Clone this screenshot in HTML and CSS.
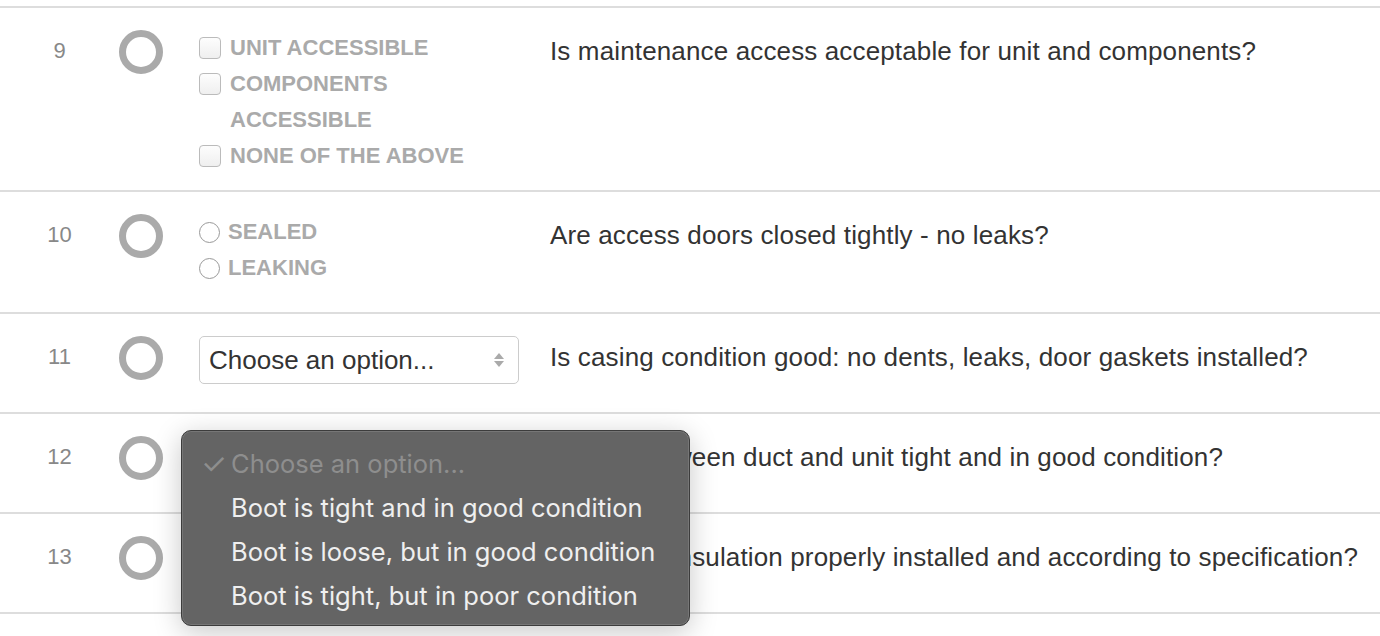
FILE: index.html
```html
<!DOCTYPE html>
<html>
<head>
<meta charset="utf-8">
<link rel="stylesheet" href="styles.css">
</head>
<body>
<div class="list">
  <div class="row">
    <div class="num">9</div>
    <div class="status"><span class="ring"></span></div>
    <div class="opts">
      <label class="opt"><span class="cb"></span><span class="lbl">UNIT ACCESSIBLE</span></label>
      <label class="opt"><span class="cb"></span><span class="lbl">COMPONENTS ACCESSIBLE</span></label>
      <label class="opt"><span class="cb"></span><span class="lbl">NONE OF THE ABOVE</span></label>
    </div>
    <div class="q">Is maintenance access acceptable for unit and components?</div>
  </div>
  <div class="row">
    <div class="num">10</div>
    <div class="status"><span class="ring"></span></div>
    <div class="opts radios">
      <label class="opt"><span class="rb"></span><span class="lbl">SEALED</span></label>
      <label class="opt"><span class="rb"></span><span class="lbl">LEAKING</span></label>
    </div>
    <div class="q">Are access doors closed tightly - no leaks?</div>
  </div>
  <div class="row">
    <div class="num">11</div>
    <div class="status"><span class="ring"></span></div>
    <div class="opts"><div class="select"><span>Choose an option...</span><span class="arrows"><i class="up"></i><i class="down"></i></span></div></div>
    <div class="q">Is casing condition good: no dents, leaks, door gaskets installed?</div>
  </div>
  <div class="row has-menu">
    <div class="num">12</div>
    <div class="status"><span class="ring"></span></div>
    <div class="opts"><div class="select closed"></div></div>
    <div class="q">Is boot between duct and unit tight and in good condition?</div>
    <ul class="menu">
      <li class="disabled"><span class="check">✓</span>Choose an option...</li>
      <li>Boot is tight and in good condition</li>
      <li>Boot is loose, but in good condition</li>
      <li>Boot is tight, but in poor condition</li>
    </ul>
  </div>
  <div class="row">
    <div class="num">13</div>
    <div class="status"><span class="ring"></span></div>
    <div class="opts"><div class="select closed"></div></div>
    <div class="q">Is the unit insulation properly installed and according to specification?</div>
  </div>
  <div class="row last">
    <div class="num"></div>
    <div class="status"><span class="ring"></span></div>
  </div>
</div>
</body>
</html>
```

FILE: styles.css
```css
html, body {
  margin: 0;
  padding: 0;
  background: #fff;
  overflow: hidden;
  height: 636px;
}
body {
  font-family: "Liberation Sans", Arial, sans-serif;
  color: #333;
}
.list {
  margin-top: 6px;
}
.row {
  position: relative;
  display: grid;
  grid-template-columns: 119px 80px 351px 1fr;
  align-items: start;
  border-top: 2px solid #ddd;
  padding: 22px 0 16px;
  min-height: 100px;
  box-sizing: border-box;
}
.num {
  text-align: center;
  font-size: 22px;
  line-height: 36px;
  padding-top: 3px;
  color: #888;
}
.ring {
  display: block;
  width: 44px;
  height: 44px;
  box-sizing: border-box;
  border: 7px solid #aaa;
  border-radius: 50%;
}
.opts {
  width: 320px;
}
.radios {
  margin-bottom: 10px;
}
.opt {
  display: flex;
  align-items: flex-start;
  font-size: 22px;
  line-height: 36px;
  font-weight: bold;
  color: #aaa;
}
.cb {
  flex: none;
  width: 22px;
  height: 22px;
  box-sizing: border-box;
  margin: 7px 9px 0 0;
  border: 1px solid #bbb;
  border-radius: 4px;
  background: linear-gradient(#fdfdfd, #efefef);
}
.rb {
  flex: none;
  width: 21px;
  height: 21px;
  box-sizing: border-box;
  margin: 8px 8px 0 0;
  border: 1px solid #999;
  border-radius: 50%;
  background: #fff;
}
.select {
  display: flex;
  align-items: center;
  justify-content: space-between;
  width: 320px;
  height: 48px;
  box-sizing: border-box;
  padding: 0 14px 0 9px;
  border: 1px solid #ccc;
  border-radius: 5px;
  font-size: 26px;
  color: #333;
  background: #fff;
}
.arrows {
  display: flex;
  flex-direction: column;
  gap: 2px;
}
.arrows i {
  display: block;
  width: 0;
  height: 0;
  border-left: 5px solid transparent;
  border-right: 5px solid transparent;
}
.arrows .up {
  border-bottom: 6px solid #aaa;
}
.arrows .down {
  border-top: 6px solid #aaa;
}
.q {
  font-size: 26px;
  letter-spacing: 0.14px;
  line-height: 36px;
  padding-top: 3px;
  color: #333;
  white-space: nowrap;
}
.menu {
  position: absolute;
  left: 181px;
  top: 16px;
  width: 509px;
  height: 196px;
  box-sizing: border-box;
  margin: 0;
  padding: 11px 0 0;
  list-style: none;
  background: #646464;
  border: 1px solid #3c3c3c;
  border-radius: 10px;
  box-shadow: inset 0 0 0 1px rgba(255,255,255,0.12), 0 6px 28px rgba(0,0,0,0.22);
  font-family: Inter, "Noto Sans", sans-serif;
  font-size: 25.5px;
  line-height: 44px;
  color: #efefef;
  z-index: 5;
}
.menu li {
  position: relative;
  padding-left: 49px;
}
.menu li.disabled {
  color: #8e8e8e;
}
.check {
  position: absolute;
  left: 19px;
  top: 0;
  font-size: 29px;
  color: #8e8e8e;
}
```
